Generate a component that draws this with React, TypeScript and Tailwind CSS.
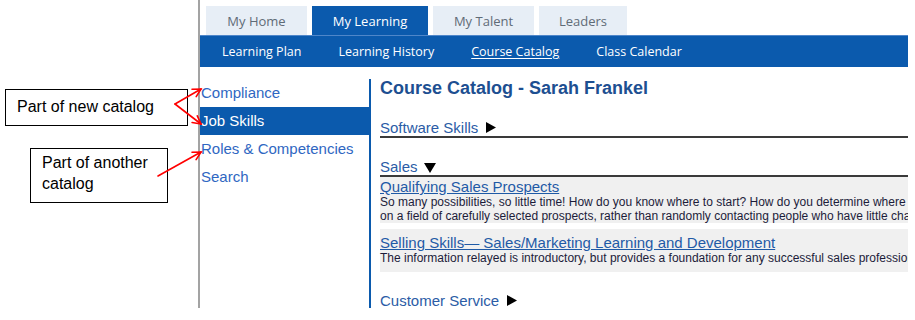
import React from "react";

const tabs = [
  { label: "My Home", w: "w-[101px]", active: false },
  { label: "My Learning", w: "w-[116px]", active: true },
  { label: "My Talent", w: "w-[101px]", active: false },
  { label: "Leaders", w: "w-[88px]", active: false },
];

const navLinks = ["Learning Plan", "Learning History", "Course Catalog", "Class Calendar"];

const sideLinks = ["Compliance", "Job Skills", "Roles & Competencies", "Search"];

const RightTri = () => (
  <svg width="10" height="11" viewBox="0 0 10 11" className="ml-[8px]">
    <polygon points="0,0 10,5.5 0,11" fill="#000" />
  </svg>
);

const DownTri = () => (
  <svg width="12" height="10" viewBox="0 0 12 10" className="ml-[6px] mt-[2px]">
    <polygon points="0,0 12,0 6,10" fill="#000" />
  </svg>
);

const App: React.FC = () => {
  return (
    <div className="relative w-[915px] h-[320px] bg-white overflow-hidden font-['Liberation_Sans',Arial,sans-serif]">
      <div className="flex h-[308px]">
        <div className="w-[198px] shrink-0" />
        <div className="w-[2px] shrink-0 bg-[#a3a3a3]" />

        <div className="w-[708px] shrink-0 flex flex-col">
          {/* top tabs */}
          <div className="flex gap-[5px] pl-[6px] pt-[6px] h-[35px] font-['Open_Sans',sans-serif] text-[13px]">
            {tabs.map((t) => (
              <div
                key={t.label}
                className={`${t.w} h-[29px] flex items-center justify-center pt-[3px] ${
                  t.active ? "bg-[#0b5aad] text-white" : "bg-[#e7eef6] text-[#5f6b77]"
                }`}
              >
                {t.label}
              </div>
            ))}
          </div>

          {/* sub nav */}
          <div className="h-[32px] bg-[#0b5aad] border-t border-[#4f86c9] flex items-center pt-[2px] pl-[22px] gap-[37px] font-['Open_Sans',sans-serif] text-[12.5px] text-white">
            {navLinks.map((n) => (
              <span key={n} className={n === "Course Catalog" ? "underline underline-offset-2" : ""}>
                {n}
              </span>
            ))}
          </div>

          <div className="flex flex-1 pt-[12px] min-h-0">
            {/* sidebar */}
            <div className="w-[169px] shrink-0 text-[15px]">
              {sideLinks.map((s) => (
                <div
                  key={s}
                  className={`h-[28px] flex items-center pl-[1px] ${
                    s === "Job Skills" ? "bg-[#0b5aad] text-white" : "text-[#2f67c2]"
                  }`}
                >
                  {s}
                </div>
              ))}
            </div>
            <div className="w-[2px] shrink-0 bg-[#0b5aad]" />

            {/* content */}
            <div className="flex-1 pl-[9px] overflow-hidden">
              <h1 className="text-[18px] leading-[18px] font-bold text-[#1d4f91] whitespace-nowrap">
                Course Catalog - Sarah Frankel
              </h1>

              <div className="mt-[22px] flex items-center border-b-2 border-[#3a3a3a] text-[15px] leading-[17px] text-[#2b5ca6]">
                Software Skills
                <RightTri />
              </div>

              <div className="mt-[20px] flex items-center border-b-2 border-[#3a3a3a] text-[15px] leading-[17px] text-[#2b5ca6]">
                Sales
                <DownTri />
              </div>

              <div className="bg-[#f0f0f0] pt-[1px] whitespace-nowrap">
                <div className="text-[15px] leading-[17px] text-[#1f5aa6] underline">
                  Qualifying Sales Prospects
                </div>
                <div className="text-[12px] leading-[14px] text-[#1c1c3a]">
                  So many possibilities, so little time! How do you know where to start? How do you determine where you should focus your efforts?
                </div>
                <div className="text-[12px] leading-[14px] text-[#1c1c3a]">
                  on a field of carefully selected prospects, rather than randomly contacting people who have little chance of becoming customers.
                </div>
              </div>

              <div className="mt-[6px] bg-[#f0f0f0] pt-[5px] pb-[7px] whitespace-nowrap">
                <div className="text-[15px] leading-[17px] text-[#1f5aa6] underline">
                  Selling Skills— Sales/Marketing Learning and Development
                </div>
                <div className="text-[12px] leading-[14px] text-[#1c1c3a]">
                  The information relayed is introductory, but provides a foundation for any successful sales professional.
                </div>
              </div>

              <div className="mt-[20px] flex items-center text-[15px] leading-[17px] text-[#2b5ca6]">
                Customer Service
                <RightTri />
              </div>
            </div>
          </div>
        </div>
      </div>

      {/* annotation callouts */}
      <div className="absolute left-[5px] top-[89px] w-[183px] h-[37px] border border-black pl-[11px] pt-[7px] text-[16px] leading-[20px] text-black">
        Part of new catalog
      </div>
      <div className="absolute left-[30px] top-[148px] w-[138px] h-[55px] border border-black pl-[11px] pt-[3px] text-[16px] leading-[21px] text-black">
        Part of another
        <br />
        catalog
      </div>
      <svg className="absolute left-0 top-0" width="210" height="210" viewBox="0 0 210 210">
        <g stroke="#ff0000" strokeWidth="1.6" fill="none" strokeLinecap="round">
          <line x1="175" y1="104" x2="201" y2="89" />
          <polyline points="192,89.3 201,89 196.2,96.6" />
          <line x1="175" y1="104" x2="201" y2="124" />
          <polyline points="197.3,115.8 201,124 192.1,122.5" />
          <line x1="158" y1="176" x2="201" y2="152" />
          <polyline points="192,152.2 201,152 196.1,159.6" />
        </g>
      </svg>
    </div>
  );
};

export default App;
